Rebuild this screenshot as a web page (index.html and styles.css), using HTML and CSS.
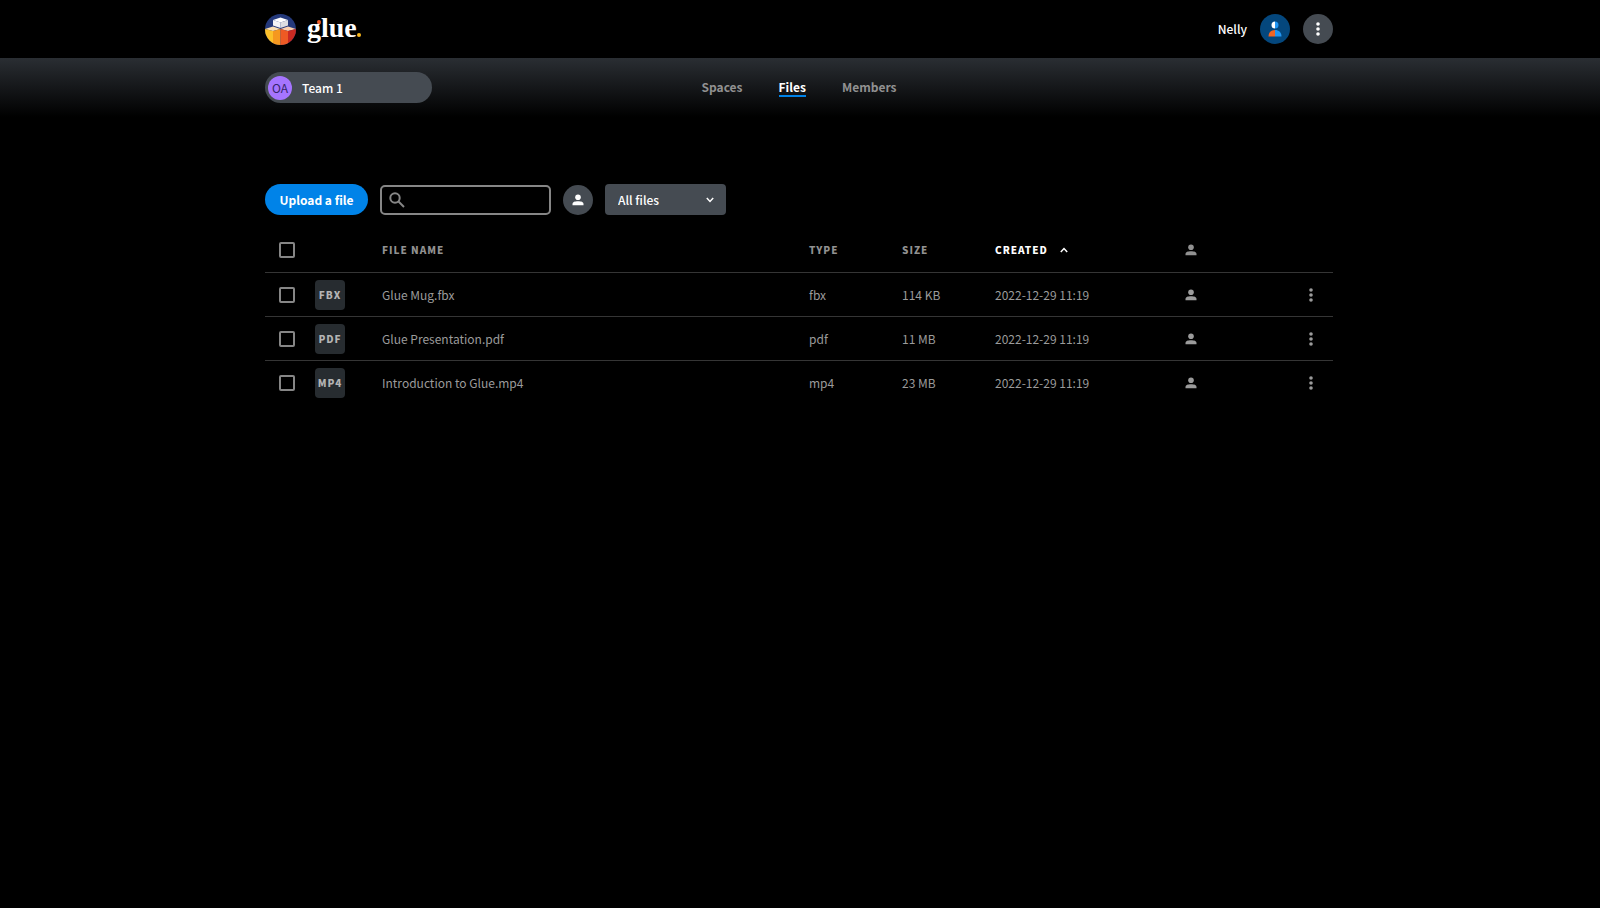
FILE: index.html
```html
<!DOCTYPE html>
<html lang="en">
<head>
<meta charset="utf-8">
<title>Glue – Files</title>
<link rel="stylesheet" href="styles.css">
</head>
<body>
<svg class="defs" aria-hidden="true">
  <symbol id="person" viewBox="0 0 12 12"><circle cx="6" cy="3.3" r="2.8"/><path d="M.5 11.2V10C.5 8 3 7.300 6 7.300S11.5 8 11.5 10v1.2z"/></symbol>
  <symbol id="dots" viewBox="0 0 4 14"><circle cx="2" cy="2" r="1.8"/><circle cx="2" cy="7" r="1.8"/><circle cx="2" cy="12" r="1.8"/></symbol>
</svg>
<header class="topbar">
  <div class="container topbar-row">
    <a class="logo" href="#" aria-label="glue.">
      <svg class="logo-mark" viewBox="0 0 31 31">
        <clipPath id="disc"><circle cx="15.5" cy="15.5" r="15.5"/></clipPath>
        <g clip-path="url(#disc)">
          <path fill="#24397b" d="M0 0h31v31H0z"/>
          <path fill="#fff" d="M15.500 3.500 23 6l-7.500 2.500L8 6z"/>
          <path fill="#f4f4f6" d="M8 6l7.500 2.500v5.500L8 11.500z"/>
          <path fill="#dcdde2" d="M23 6l-7.500 2.500v5.500l7.500-2.500z"/>
          <path fill="#fbe0b4" d="M0 15l8-2.500 7.500 2.500L8 17z"/>
          <path fill="#fbcfae" d="M15.500 15l7.500-2.500L31 15l-8 2z"/>
          <path fill="#fbc02a" d="M0 15l8 2v14H0z"/>
          <path fill="#f5981f" d="M8 17l7.500-2v16H8z"/>
          <path fill="#ee5a24" d="M15.500 15l7.500 2v14h-7.500z"/>
          <path fill="#c92a22" d="M23 17l8-2v16h-8z"/>
        </g>
      </svg>
      <span class="wordmark">glue<span class="stop"></span></span>
    </a>
    <div class="account">
      <span class="user">Nelly</span>
      <button class="round avatar" aria-label="Profile">
        <svg class="avatar-icon" viewBox="0 0 14 16">
          <path fill="#fff" d="M7 .5a3.500 3.500 0 0 0 0 7z"/><path fill="#2196f3" d="M7 .5a3.500 3.500 0 0 1 0 7z"/>
          <path fill="#f26522" d="M7 9C3 9 .5 11.500.5 15.500H7z"/><path fill="#2196f3" d="M7 9c4 0 6.500 2.500 6.500 6.500H7z"/>
        </svg>
      </button>
      <button class="round" aria-label="Menu"><svg class="dots"><use href="#dots"/></svg></button>
    </div>
  </div>
</header>
<div class="subbar">
  <div class="container subbar-row">
    <button class="team"><span class="team-badge">OA</span>Team 1</button>
    <nav class="tabs">
      <a href="#">Spaces</a>
      <a href="#" class="active" aria-current="page">Files</a>
      <a href="#">Members</a>
    </nav>
  </div>
</div>
<main class="container">
  <div class="toolbar">
    <button class="upload">Upload a file</button>
    <label class="search">
      <svg viewBox="0 0 16 16"><circle cx="6" cy="6" r="4.700"/><path d="M9.500 9.500 15 15"/></svg>
      <input type="text" aria-label="Search files">
    </label>
    <button class="round" aria-label="My files"><svg class="person"><use href="#person"/></svg></button>
    <div class="filter">
      <select aria-label="File filter"><option>All files</option></select>
      <svg class="chevron" viewBox="0 0 8 6"><path d="M.8 1 4 4.400 7.200 1"/></svg>
    </div>
  </div>
  <table class="files">
    <colgroup><col class="c-check"><col class="c-badge"><col><col class="c-type"><col class="c-size"><col class="c-created"><col class="c-owner"><col class="c-menu"></colgroup>
    <thead>
      <tr>
        <th class="check"><input type="checkbox" aria-label="Select all"></th>
        <th></th>
        <th>FILE NAME</th>
        <th>TYPE</th>
        <th>SIZE</th>
        <th class="sorted" aria-sort="ascending">CREATED<svg class="sort" viewBox="0 0 8 6"><path d="M.8 5 4 1.600 7.200 5"/></svg></th>
        <th><svg class="person"><use href="#person"/></svg></th>
        <th></th>
      </tr>
    </thead>
    <tbody>
      <tr>
        <td class="check"><input type="checkbox" aria-label="Select Glue Mug.fbx"></td>
        <td><span class="ext">FBX</span></td>
        <td>Glue Mug.fbx</td><td>fbx</td><td>114 KB</td><td>2022-12-29 11:19</td>
        <td><svg class="person"><use href="#person"/></svg></td>
        <td><button class="more" aria-label="More"><svg class="dots"><use href="#dots"/></svg></button></td>
      </tr>
      <tr>
        <td class="check"><input type="checkbox" aria-label="Select Glue Presentation.pdf"></td>
        <td><span class="ext">PDF</span></td>
        <td>Glue Presentation.pdf</td><td>pdf</td><td>11 MB</td><td>2022-12-29 11:19</td>
        <td><svg class="person"><use href="#person"/></svg></td>
        <td><button class="more" aria-label="More"><svg class="dots"><use href="#dots"/></svg></button></td>
      </tr>
      <tr>
        <td class="check"><input type="checkbox" aria-label="Select Introduction to Glue.mp4"></td>
        <td><span class="ext">MP4</span></td>
        <td>Introduction to Glue.mp4</td><td>mp4</td><td>23 MB</td><td>2022-12-29 11:19</td>
        <td><svg class="person"><use href="#person"/></svg></td>
        <td><button class="more" aria-label="More"><svg class="dots"><use href="#dots"/></svg></button></td>
      </tr>
    </tbody>
  </table>
</main>
</body>
</html>
```
FILE: styles.css
```css
* { box-sizing: border-box; }
html { background: #000; }
body {
  margin: 0;
  background: #000;
  color: #fff;
  font: 12px/16px "Noto Sans CJK JP", "Noto Sans", sans-serif;
}
button, input, select { font: inherit; color: inherit; margin: 0; border: 0; }
button { padding: 0; cursor: pointer; background: none; }
svg { display: block; }
.defs { display: none; }
.container { width: 100%; max-width: 1070px; margin: 0 auto; padding-right: 2px; }

.topbar-row { display: flex; align-items: center; justify-content: space-between; height: 58px; }
.logo { display: flex; align-items: center; gap: 11px; color: #fff; text-decoration: none; }
.logo-mark { width: 31px; height: 31px; }
.wordmark { position: relative; font: bold 28px/36px "Liberation Serif", serif; padding-bottom: 2px; }
.wordmark::after {
  content: ""; position: absolute; left: 10px; top: 10px;
  width: 4px; height: 4px; border-radius: 50%; background: #f15a24;
}
.stop { display: inline-block; width: 4px; height: 4px; border-radius: 50%; background: #fbb81c; }
.account { display: flex; align-items: center; gap: 13px; }
.user { font-weight: 500; }
.round {
  display: flex; align-items: center; justify-content: center; flex: none;
  width: 30px; height: 30px; border-radius: 50%; background: #454b52; color: #fff;
}
.avatar { background: #04477d; }
.avatar-icon { width: 14px; height: 16px; }
.dots { width: 4px; height: 14px; fill: currentColor; }
.person { width: 12px; height: 12px; fill: currentColor; }

.subbar { background: linear-gradient(#2a2e33, #000); }
.subbar-row { display: grid; grid-template-columns: 1fr auto 1fr; align-items: center; height: 59px; }
.team {
  display: flex; align-items: center; gap: 10px; width: 167px; height: 31px; padding-left: 3px;
  border-radius: 16px; background: #454b52; font-weight: 500;
}
.team-badge { width: 24px; height: 24px; border-radius: 50%; background: #a675ff; color: #35246b; line-height: 24px; font-weight: 400; }
.tabs { display: flex; gap: 36px; font-weight: 700; }
.tabs a { color: #919191; text-decoration: none; border-bottom: 2px solid transparent; }
.tabs .active { color: #fff; border-color: #0083e8; }

.toolbar { display: flex; align-items: center; gap: 12px; margin-top: 67px; }
.upload { width: 103px; height: 31px; border-radius: 16px; background: #0083e8; font-weight: 700; }
.search {
  display: flex; align-items: center; gap: 8px; width: 171px; height: 30px; padding: 0 7px;
  border: 2px solid #868686; border-radius: 5px;
}
.search svg { width: 16px; height: 16px; flex: none; fill: none; stroke: #868686; stroke-width: 2; }
.search input { width: 100%; background: none; outline: 0; }
.filter { position: relative; }
.filter select {
  appearance: none; width: 121px; height: 31px; padding: 0 13px; border-radius: 4px;
  background: #454b52; font-weight: 500;
}
.chevron { position: absolute; right: 12px; top: 13px; width: 8px; height: 6px; pointer-events: none; }
.chevron, .sort { fill: none; stroke: #fff; stroke-width: 1.500; }

.files { width: 100%; margin-top: 13px; border-collapse: collapse; table-layout: fixed; color: #9b9b9b; }
.files tr { height: 44px; }
.files tbody tr { border-top: 1px solid #353535; }
.files th, .files td { padding: 0; text-align: left; vertical-align: middle; }
.files tbody td { padding-top: 1px; }
.files th { font-size: 10px; font-weight: 900; letter-spacing: 1px; color: #919191; }
.files .check { padding-left: 14px; }
.files .sorted { color: #fff; }
.sort { display: inline-block; width: 8px; height: 6px; margin-left: 12px; vertical-align: 1px; }
.c-check { width: 50px; }
.c-badge { width: 67px; }
.c-type, .c-size { width: 93px; }
.c-created { width: 190px; }
.c-owner { width: 124px; }
.c-menu { width: 24px; }
.check input {
  display: block; appearance: none; width: 16px; height: 16px;
  border: 2px solid #868686; border-radius: 2px;
}
.ext {
  display: block; width: 30px; height: 30px; border-radius: 4px; background: #272c30; color: #b4b4b4;
  font-size: 10px; font-weight: 900; letter-spacing: 1px; line-height: 30px; text-align: center;
}
.more { display: block; color: #9b9b9b; }
```
